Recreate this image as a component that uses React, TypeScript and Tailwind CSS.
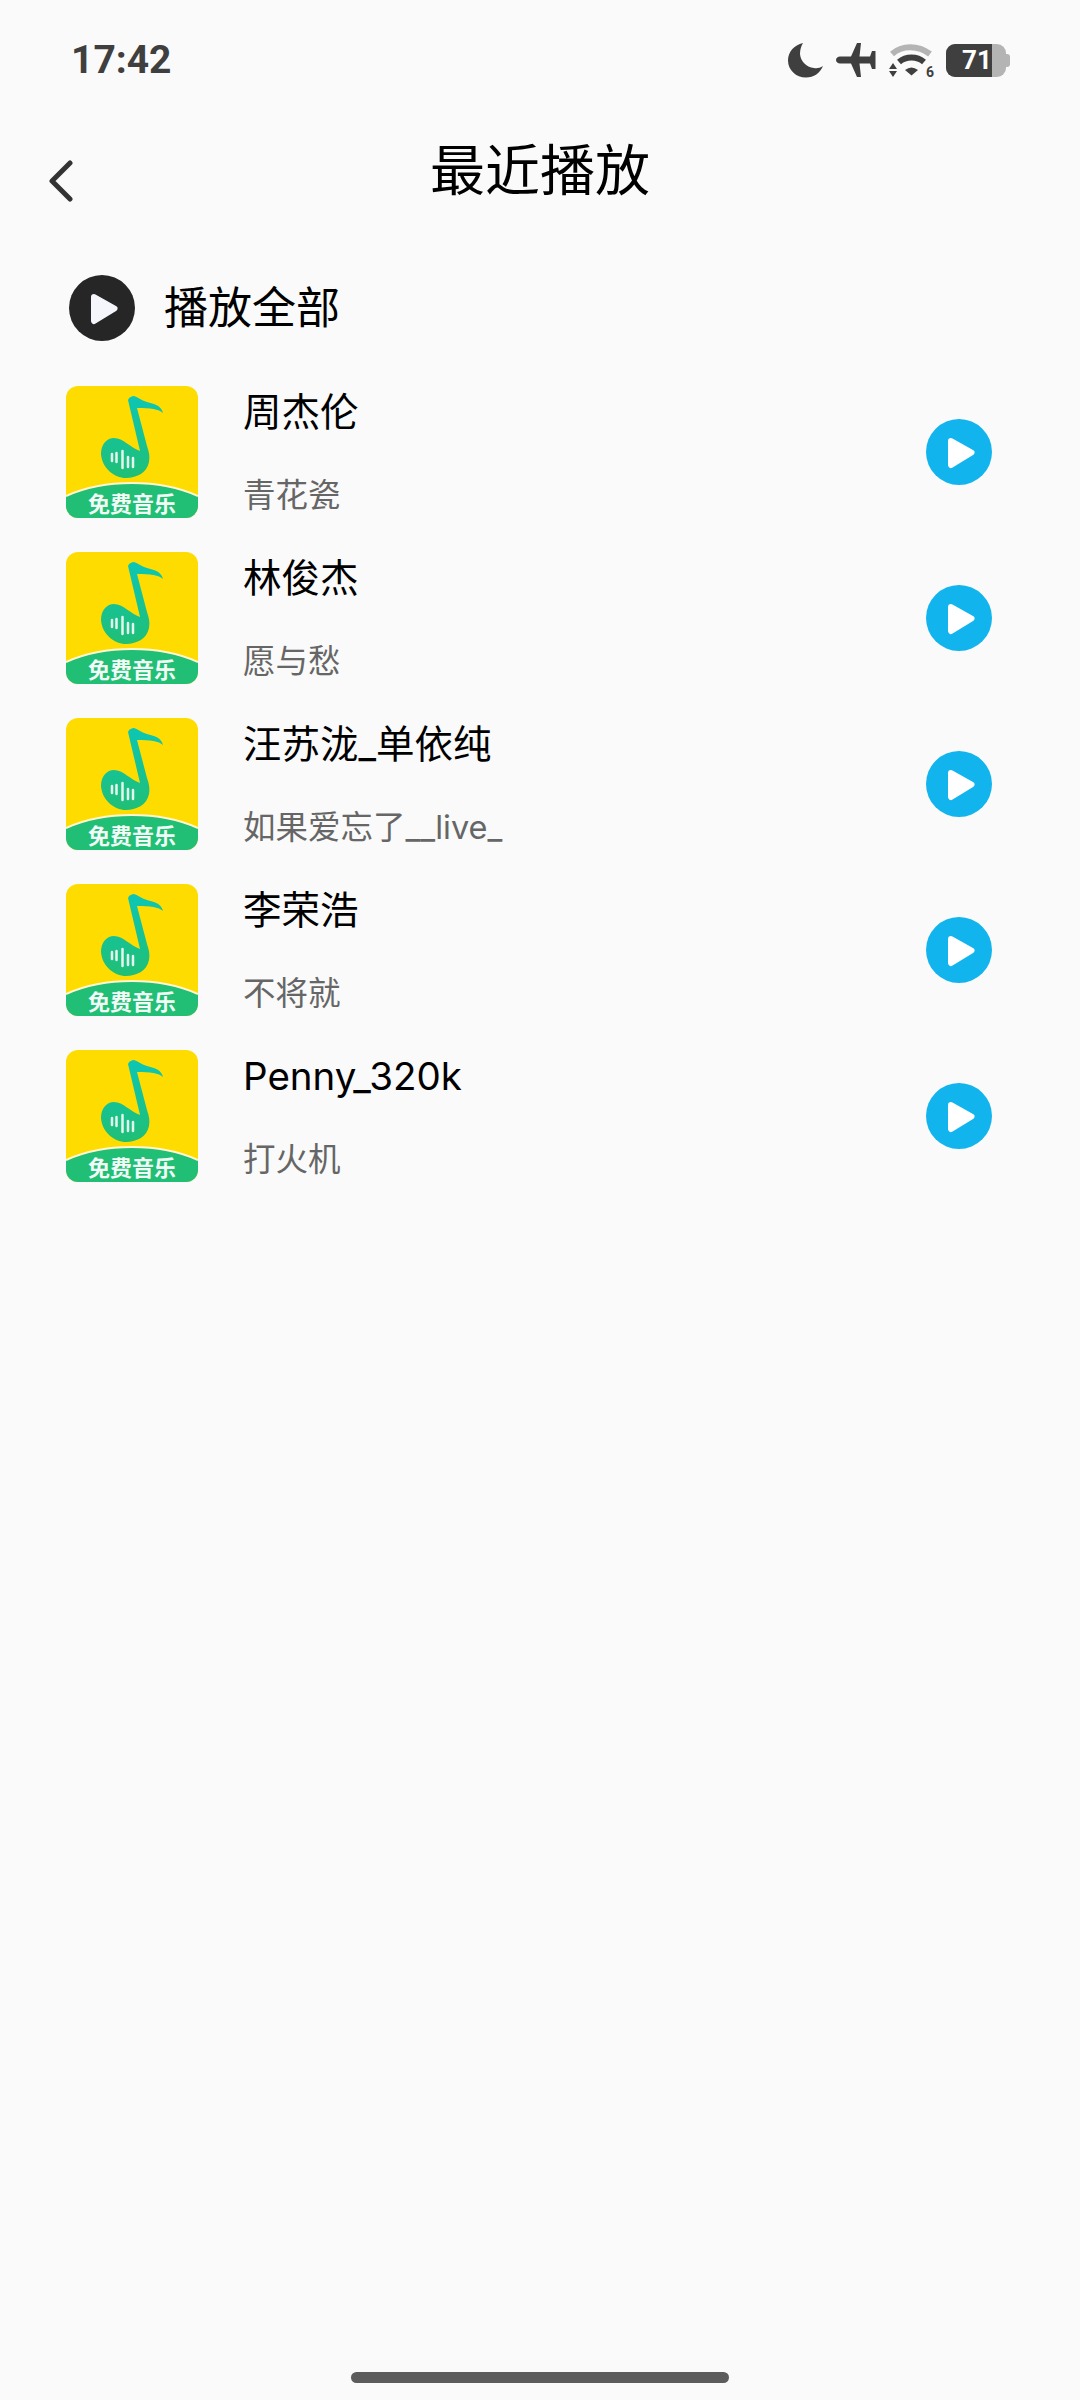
const songs = [
  { artist: "周杰伦", title: "青花瓷" },
  { artist: "林俊杰", title: "愿与愁" },
  { artist: "汪苏泷_单依纯", title: "如果爱忘了__live_" },
  { artist: "李荣浩", title: "不将就" },
  { artist: "Penny_320k", title: "打火机" },
];

const font = "font-['Inter','Noto_Sans_CJK_SC',sans-serif]";
const digits = "font-['Roboto',sans-serif]";

function PlayButton({ bg, fill }: { bg: string; fill: string }) {
  return (
    <svg viewBox="0 0 66 66" className="w-[66px] h-[66px] shrink-0">
      <circle cx="33" cy="33" r="33" fill={bg} />
      <path
        d="M25 22 L45.500 33.500 L25 46 Z"
        fill={fill}
        stroke={fill}
        strokeWidth="6"
        strokeLinejoin="round"
      />
    </svg>
  );
}

function Cover() {
  return (
    <div className="relative w-[132px] h-[132px] shrink-0 rounded-[12px] overflow-hidden bg-[#ffdc00]">
      <svg viewBox="0 0 132 132" className="w-[132px] h-[132px]">
        <defs>
          <linearGradient id="note" x1="0" y1="0" x2="0" y2="1">
            <stop offset="0" stopColor="#0cc6b4" />
            <stop offset="1" stopColor="#20bf75" />
          </linearGradient>
        </defs>
        <path
          d="M62 14 C63 11 66 10 68 10 C72 11 76 15 81 16 C88 18 95 19 97 27 C93 23 84 22 71 22 L81 60 C83 66 84 70 83 76 C81 87 70 92 60 92 C48 92 36 82 35 68 C35 58 41 52 48 52 C57 52 65 62 74 65 Z"
          fill="url(#note)"
        />
        <g stroke="#e4f7ee" strokeWidth="2.500" strokeLinecap="round">
          <path d="M46 68 V75" />
          <path d="M50.500 67 V76" />
          <path d="M56.500 65 V82" />
          <path d="M62 71 V81" />
          <path d="M67 72 V81" />
        </g>
        <path d="M0 110 C20 101 44 97 66 97 C90 97 112 101 132 110 V132 H0 Z" fill="#20bf75" />
        <path d="M0 110 C20 101 44 97 66 97 C90 97 112 101 132 110" fill="none" stroke="#fff8d0" strokeWidth="2" />
      </svg>
      <span className={`absolute left-0 right-0 bottom-0 text-center text-[22px] leading-[28px] font-bold text-[#f2fbf6] ${font}`}>
        免费音乐
      </span>
    </div>
  );
}

function StatusIcons() {
  return (
    <div className="flex items-center">
      <svg viewBox="0 0 36 36" className="w-[36px] h-[36px] mr-[11px]">
        <path d="M15 1 C6 3 0 10 0 18.500 C0 28 8 35.500 18 35.500 C26 35.500 32 31 35 24 C32 26 29 26.500 26 26 C18 25 12.500 19 12 12 C12 8 13 4 15 1 Z" fill="#3f3f3f" />
      </svg>
      <svg viewBox="0 0 42 36" className="w-[42px] h-[36px] mr-[11px]">
        <path d="M1 18 C1 16 3 14.500 5 14.500 H16 L22 1 H26 L24.500 14.500 H35 L37 9 H40.500 V27 H37 L35 21.500 H24.500 L26 35 H22 L16 21.500 H5 C3 21.500 1 20 1 18 Z" fill="#3f3f3f" />
      </svg>
      <svg viewBox="0 -3 48 42" className="w-[48px] h-[42px] -my-[3px] mr-[10px]">
        <path d="M4 12 C14 3 30 3 42 12" fill="none" stroke="#b4b4b4" strokeWidth="6" />
        <path d="M11 20 C18 14 29 14 36 20" fill="none" stroke="#3f3f3f" strokeWidth="6" />
        <path d="M17 28 Q23.500 23 30 28 L23.500 33.500 Z" fill="#3f3f3f" />
        <path d="M1 27 L5 21 L9 27 Z M1 29 H9 L5 35 Z" fill="#3f3f3f" />
        <text x="38" y="34.500" fontSize="14" fontWeight="700" fill="#3f3f3f" fontFamily="Roboto, sans-serif">6</text>
      </svg>
      <div className="flex items-center">
        <div className="relative w-[60px] h-[33px] rounded-[9px] overflow-hidden bg-[#b4b4b4]">
          <div className="w-[46px] h-full bg-[#3f3f3f]" />
          <span className={`absolute left-[16px] top-0 text-[26px] leading-[33px] font-bold text-white ${digits}`}>71</span>
        </div>
        <div className="w-[4px] h-[13px] rounded-r-[3px] bg-[#b4b4b4]" />
      </div>
    </div>
  );
}

function SongRow({ artist, title }: { artist: string; title: string }) {
  return (
    <div className="flex items-center h-[132px] mb-[34px]">
      <Cover />
      <div className="flex-1 ml-[45px] h-full">
        <p className="text-[38.5px] leading-[50px] mt-[1px] text-black">{artist}</p>
        <p className="text-[32.5px] leading-[42px] mt-[38px] text-[#666666]">{title}</p>
      </div>
      <PlayButton bg="#12b4ee" fill="#ffffff" />
    </div>
  );
}

export default function App() {
  return (
    <div className={`relative h-[2400px] bg-[#fafafa] ${font}`}>
      <div className="absolute top-[30px] left-0 right-0 flex items-center justify-between h-[60px] pl-[71px] pr-[70px]">
        <span className={`text-[39px] font-bold text-[#3f3f3f] ${digits}`}>17:42</span>
        <StatusIcons />
      </div>

      <div className="relative pt-[134px] h-[250px]">
        <h1 className="text-center text-[55px] leading-[72px] text-black">最近播放</h1>
        <svg viewBox="0 0 24 42" className="absolute left-[49px] top-[160px] w-[24px] h-[42px]">
          <path d="M21 3 L3 21 L21 39" fill="none" stroke="#333333" strokeWidth="5" strokeLinecap="round" strokeLinejoin="round" />
        </svg>
      </div>

      <div className="flex items-center pl-[69px] h-[66px] mt-[25px]">
        <PlayButton bg="#262626" fill="#f5f6fc" />
        <span className="ml-[29px] text-[44px] leading-[56px] text-black">播放全部</span>
      </div>

      <div className="mt-[45px] pl-[66px] pr-[88px]">
        {songs.map((s) => (
          <SongRow key={s.artist} artist={s.artist} title={s.title} />
        ))}
      </div>

      <div className="absolute bottom-[17px] left-[351px] w-[378px] h-[11px] rounded-full bg-[#5c5c5c]" />
    </div>
  );
}
